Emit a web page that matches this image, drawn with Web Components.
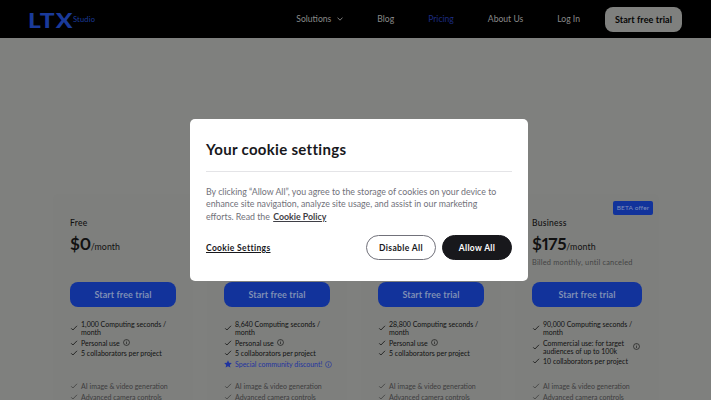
<!DOCTYPE html>
<html>
<head>
<meta charset="utf-8">
<style>
	html, body { margin: 0; height: 100%; overflow: hidden; }
	body { font-family: Lato, "Liberation Sans", sans-serif; background: #7f807e; }
</style>
</head>
<body>
<ltx-page>
	<ltx-nav></ltx-nav>
	<ltx-pricing>
		<ltx-plan name="Free" price="$0" features="1,000 Computing seconds / month|Personal use*|5 collaborators per project"></ltx-plan>
		<ltx-plan features="8,640 Computing seconds / month|Personal use*|5 collaborators per project|!Special community discount!*"></ltx-plan>
		<ltx-plan features="28,800 Computing seconds / month|Personal use*|5 collaborators per project"></ltx-plan>
		<ltx-plan name="Business" price="$175" wide beta note="Billed monthly, until canceled" features="90,000 Computing seconds / month|Commercial use: for target audiences of up to 100k*|10 collaborators per project"></ltx-plan>
	</ltx-pricing>
</ltx-page>
<ltx-cookie-modal></ltx-cookie-modal>

<script>
const CHECK = `<svg width="8" height="8" viewBox="0 0 8 8" fill="none" stroke="currentColor" stroke-width=".8"><path d="M1.200 4.300l1.700 1.700L7 1.800"/></svg>`;
const INFO = `<svg width="7" height="7" viewBox="0 0 8 8" fill="none" stroke="currentColor" stroke-width=".7"><circle cx="4" cy="4" r="3.400"/><path d="M4 3.500v2.300M4 2v.8"/></svg>`;
const STAR = `<svg width="8" height="8" viewBox="0 0 8 8" fill="currentColor"><path d="M4 .3l1.100 2.500 2.700.3-2 1.800.6 2.700L4 6.200 1.600 7.600l.6-2.700-2-1.800 2.700-.3z"/></svg>`;

class LtxPage extends HTMLElement {
	constructor(){
		super();
		this.attachShadow({mode:"open"});
		this.shadowRoot.innerHTML = `
			<style>
				:host { display: block; height: 400px; overflow: hidden; background: #7f807e; }
			</style>
			<slot></slot>
		`;
	}
}
customElements.define("ltx-page",LtxPage);

class LtxNav extends HTMLElement {
	constructor(){
		super();
		this.attachShadow({mode:"open"});
		this.shadowRoot.innerHTML = `
			<style>
				:host {
					display: flex;
					align-items: center;
					box-sizing: border-box;
					height: 38px;
					padding: 0 29px 0 28px;
					background: #000;
					color: #8a8a8a;
					font-size: 8.600px;
				}
				.logo { display: flex; align-items: center; color: #1a3a9a; margin-right: auto; }
				.ltx { display: inline-block; width: 45px; font-size: 21px; font-weight: 900; letter-spacing: 1px; line-height: 1; transform: scaleX(1.170); transform-origin: left center; }
				.studio { font-size: 7.500px; letter-spacing: .2px; }
				a { color: inherit; margin-left: 34px; display: flex; align-items: center; gap: 6px; }
				a.on { color: #1c2b80; }
				svg { display: block; }
				.cta {
					margin-left: 25px;
					width: 77px;
					height: 25px;
					border-radius: 8px;
					background: #7f807e;
					color: #050505;
					font-size: 9px;
					font-weight: 700;
					letter-spacing: .1px;
					display: flex;
					align-items: center;
					justify-content: center;
				}
			</style>
			<div class="logo"><span class="ltx">LTX</span><span class="studio">Studio</span></div>
			<a>Solutions <svg width="6" height="4" viewBox="0 0 6 4" fill="none" stroke="currentColor" stroke-width=".9"><path d="M.5.6L3 3.200 5.500.6"/></svg></a>
			<a>Blog</a>
			<a class="on">Pricing</a>
			<a>About Us</a>
			<a>Log In</a>
			<div class="cta">Start free trial</div>
		`;
	}
}
customElements.define("ltx-nav",LtxNav);

class LtxPricing extends HTMLElement {
	constructor(){
		super();
		this.attachShadow({mode:"open"});
		this.shadowRoot.innerHTML = `
			<style>
				:host {
					display: flex;
					gap: 14px;
					padding: 156px 0 0 53px;
					align-items: flex-start;
				}
			</style>
			<slot></slot>
		`;
	}
}
customElements.define("ltx-pricing",LtxPricing);

class LtxPlan extends HTMLElement {
	constructor(){
		super();
		this.attachShadow({mode:"open"});
		let wide = this.hasAttribute("wide");
		let price = this.getAttribute("price");
		let rows = this.getAttribute("features").split("|").map(f=>{
			let special = f.startsWith("!");
			let info = f.endsWith("*");
			let text = f.replace(/^!/,"").replace(/\*$/,"");
			return `<li class="${special?"special":""}">${special?STAR:CHECK}<span>${text}</span>${info?`<i>${INFO}</i>`:""}</li>`;
		}).join("");
		this.shadowRoot.innerHTML = `
			<style>
				:host {
					display: block;
					position: relative;
					box-sizing: border-box;
					width: ${wide?"144px":"140px"};
					height: 260px;
					padding: 23px 0 0 17px;
					background: #7e7f7d;
					border-radius: 6px 6px 0 0;
					color: #111;
				}
				.beta {
					position: absolute;
					left: 98px;
					top: 7px;
					width: 40px;
					height: 14px;
					background: #12339b;
					color: #8090bb;
					border-radius: 2px;
					font-size: 6.500px;
					letter-spacing: .15px;
					line-height: 14px;
					text-align: center;
				}
				.name { height: 12px; font-size: 8.500px; letter-spacing: .25px; line-height: 12px; font-weight: 500; }
				.price { margin-top: 2px; height: 25px; font-size: 17px; font-weight: 700; letter-spacing: -.3px; line-height: 25px; font-feature-settings: "pnum"; }
				.price small { font-size: 8.800px; font-weight: 400; letter-spacing: .1px; }
				.note { margin-top: 1px; height: 12px; font-size: 7.400px; letter-spacing: .2px; line-height: 12px; color: #444; white-space: nowrap; }
				.btn {
					margin-top: 13px;
					width: ${wide?"110px":"106px"};
					height: 25px;
					border-radius: 8px;
					background: #12339b;
					color: #7f8fb5;
					font-size: 9px;
					font-weight: 700;
					letter-spacing: .1px;
					display: flex;
					align-items: center;
					justify-content: center;
				}
				ul { list-style: none; margin: 13px 0 0; padding: 0; box-sizing: border-box; width: ${wide?"110px":"106px"}; height: 62px; font-size: 7px; line-height: 8px; }
				li { display: flex; align-items: center; gap: 3px; margin-bottom: 2.700px; }
				li span { flex: 0 1 auto; min-width: 0; }
				li.special { color: #1f33a0; white-space: nowrap; }
				li.special span { flex: none; }
				li i { display: block; margin: 0 2px 0 0; }
				li svg { display: block; flex: none; }
				ul.tools { margin-top: 0; color: #3d3d3d; height: auto; }
				ul.tools li { margin-bottom: 3.300px; }
			</style>
			${this.hasAttribute("beta")?`<div class="beta">BETA offer</div>`:""}
			<div class="name">${this.getAttribute("name")||""}</div>
			<div class="price">${price?`${price}<small>/month</small>`:""}</div>
			<div class="note">${this.getAttribute("note")||""}</div>
			<div class="btn">Start free trial</div>
			<ul>${rows}</ul>
			<ul class="tools">
				<li>${CHECK}<span>AI image &amp; video generation</span></li>
				<li>${CHECK}<span>Advanced camera controls</span></li>
			</ul>
		`;
	}
}
customElements.define("ltx-plan",LtxPlan);

class LtxCookieModal extends HTMLElement {
	constructor(){
		super();
		this.attachShadow({mode:"open"});
		this.shadowRoot.innerHTML = `
			<style>
				:host {
					position: fixed;
					left: 190px;
					top: 119px;
					width: 338px;
					height: 162px;
					box-sizing: border-box;
					padding: 0 16px;
					background: #fff;
					border-radius: 5px;
					color: #18181c;
					display: flex;
					flex-direction: column;
				}
				h2 { margin: 0; height: 53px; box-sizing: border-box; line-height: 61px; font-size: 15px; font-weight: 700; letter-spacing: .3px; border-bottom: 1px solid #e4e4e7; }
				p { margin: 13.500px 0 0; font-size: 8.800px; line-height: 12.500px; color: #71717a; }
				p a { color: #3f3f46; font-weight: 700; text-decoration: underline; margin-left: 1px; }
				.actions { display: flex; align-items: center; margin-top: 12px; gap: 6px; font-size: 8.500px; font-weight: 700; letter-spacing: .35px; }
				.settings { margin-right: auto; text-decoration: underline; }
				.btn { box-sizing: border-box; width: 70px; height: 25px; border-radius: 13px; display: flex; align-items: center; justify-content: center; border: 1px solid #71717a; }
				.btn.dark { background: #18181c; border-color: #18181c; color: #fff; }
			</style>
			<h2>Your cookie settings</h2>
			<p>By clicking “Allow All”, you agree to the storage of cookies on your device to<br>enhance site navigation, analyze site usage, and assist in our marketing<br>efforts. Read the <a>Cookie Policy</a></p>
			<div class="actions">
				<span class="settings">Cookie Settings</span>
				<div class="btn">Disable All</div>
				<div class="btn dark">Allow All</div>
			</div>
		`;
	}
}
customElements.define("ltx-cookie-modal",LtxCookieModal);
</script>
</body>
</html>
